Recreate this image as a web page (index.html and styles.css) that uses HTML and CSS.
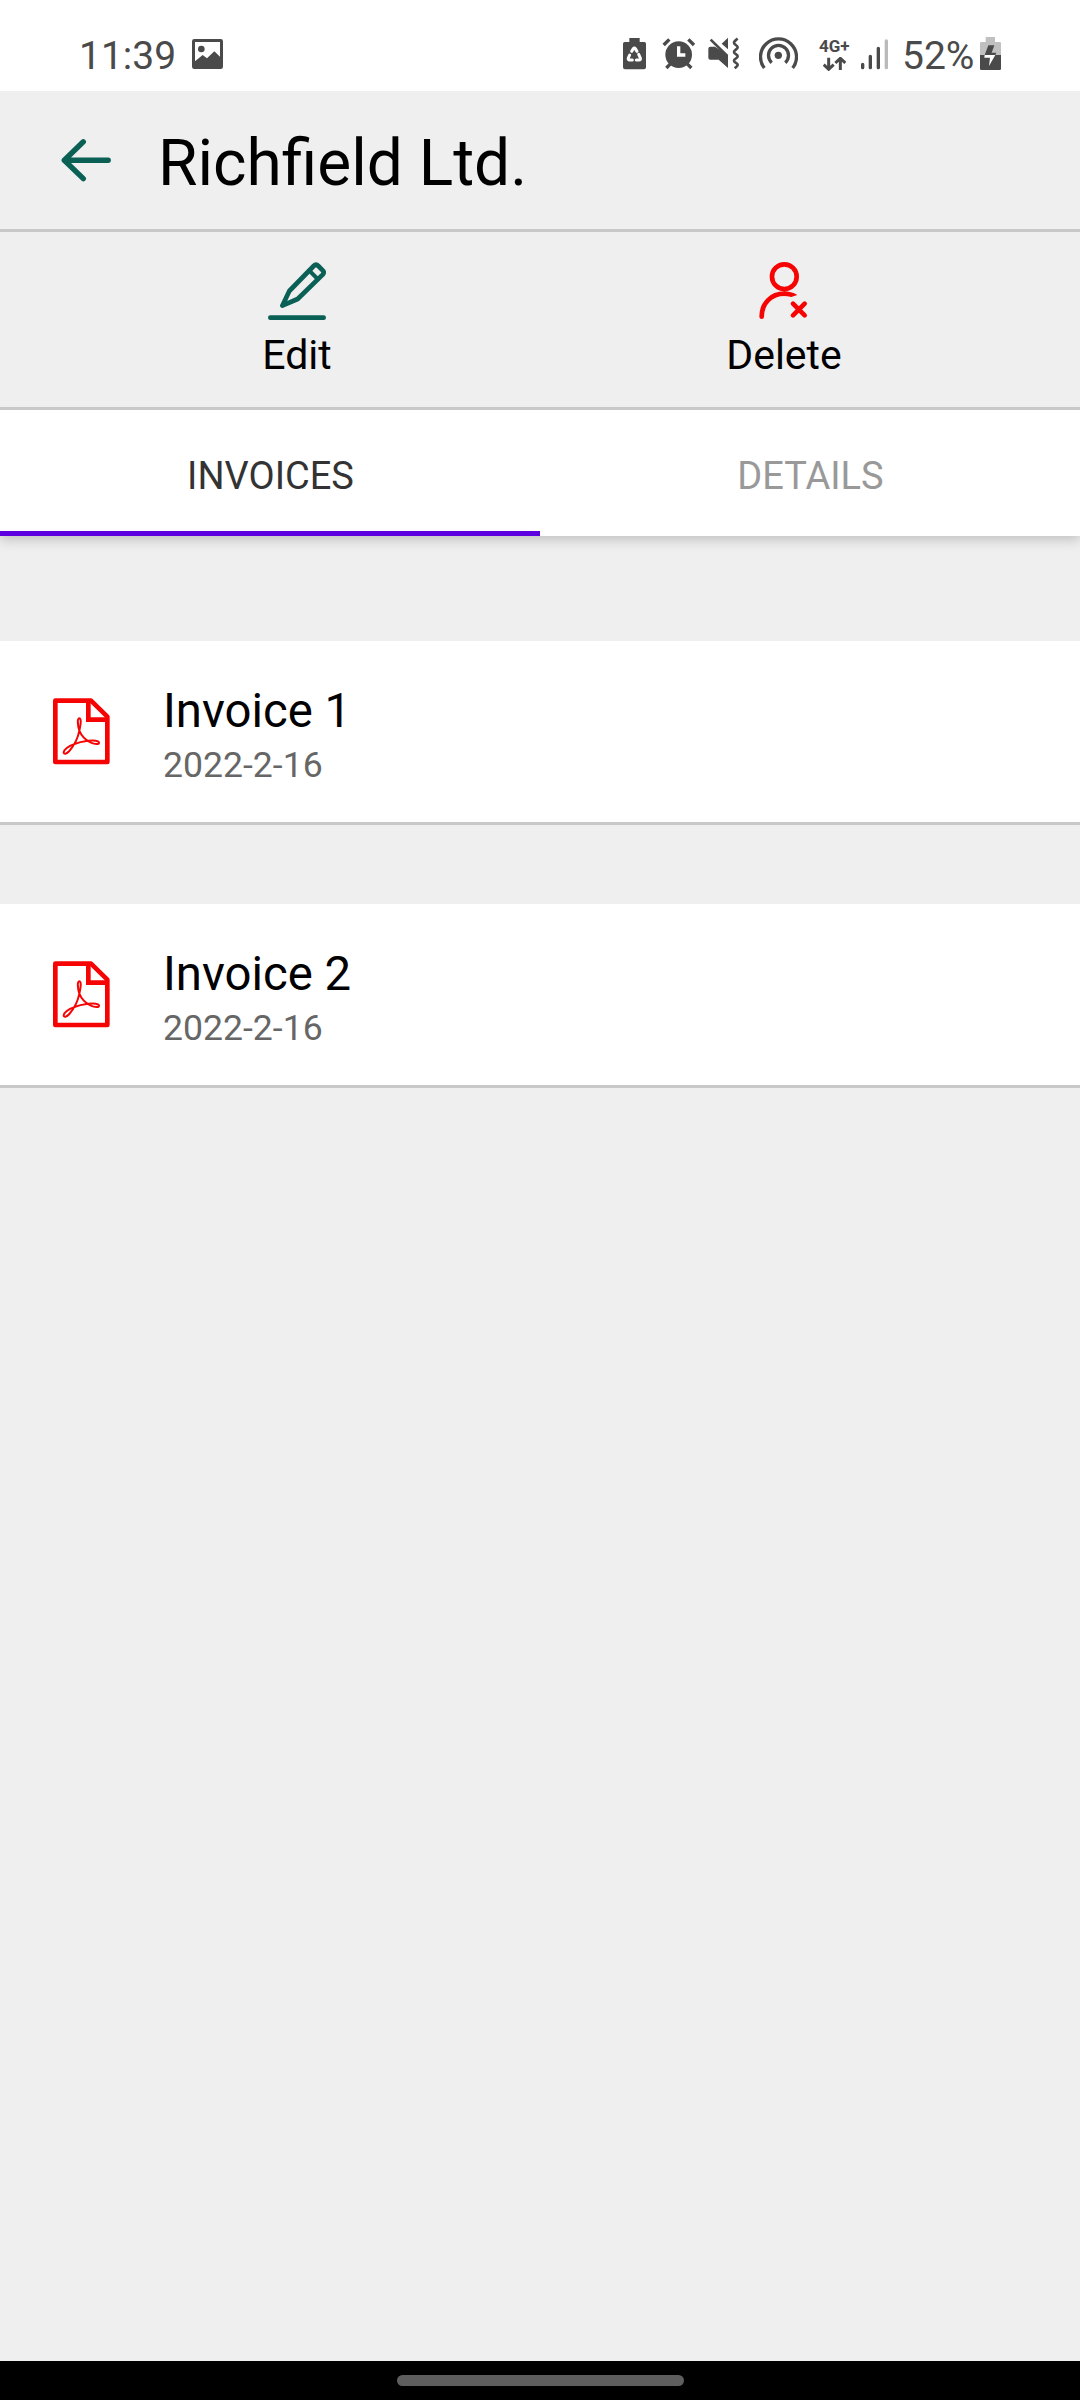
FILE: index.html
```html
<!DOCTYPE html>
<html lang="en">
<head>
<meta charset="utf-8">
<title>Richfield Ltd.</title>
<link rel="stylesheet" href="styles.css">
</head>
<body>
<div class="screen">
  <div class="status-bar">
    <div class="status-group status-left">
      <span class="status-text clock">11:39</span>
      <svg width="31" height="36" viewBox="396 45 93 108">
        <path fill="#4a4a4a" fill-rule="evenodd" d="M403 57h79q7 0 7 7v76q0 7-7 7h-79q-7 0-7-7V64q0-7 7-7zM405 66v58l23-19 13 10 22-21 17 16V66z"/>
        <circle cx="424" cy="87" r="10" fill="#4a4a4a"/>
      </svg>
    </div>
    <div class="status-group">
      <svg width="23" height="36" viewBox="69 45 69 108">
        <path fill="#4a4a4a" d="M88 54h31v12h14q5 0 5 5v71q0 6-6 6H75q-6 0-6-6V71q0-5 5-5h14z"/>
        <path fill="none" stroke="#fff" stroke-width="9" stroke-linecap="round" stroke-linejoin="round" d="M95 94l5-8q3-4 6 0l5 8M116 103l5 11q2 6-4 6h-8M97 120h-8q-6 0-4-6l4-9"/>
      </svg>
      <svg class="alarm" width="34" height="36" viewBox="187 45 102 108">
        <circle cx="237" cy="104" r="40" fill="#4a4a4a"/>
        <path fill="none" stroke="#4a4a4a" stroke-width="10" d="M192 75l17-17M283 75l-17-17M200 144l13-13M275 144l-13-13"/>
        <path fill="none" stroke="#fff" stroke-width="10" d="M237 79v26h20"/>
      </svg>
      <svg class="mute" width="31" height="36" viewBox="324 45 93 108">
        <path fill="#4a4a4a" d="M331 80h14l39 26v38l-28-25h-25q-6 0-6-6V86q0-6 6-6zM365 71l19-18v35z"/>
        <path fill="none" stroke="#4a4a4a" stroke-width="8" d="M332 59l50 49"/>
        <path fill="none" stroke="#4a4a4a" stroke-width="8" stroke-linejoin="round" d="M413 56c-8 6-11 9-11 12 0 6 11 8 11 14s-11 8-11 14 11 7 11 13-11 7-11 13 11 7 11 12c0 3-3 6-9 11"/>
      </svg>
      <svg class="hotspot" width="39" height="36" viewBox="477 45 117 108">
        <circle cx="535" cy="106" r="11" fill="#4a4a4a"/>
        <path fill="none" stroke="#4a4a4a" stroke-width="10" d="M515 128a30 30 0 1 1 41 0M493 144a54 54 0 1 1 85 0"/>
      </svg>
      <div class="network">
        <span class="network-label">4G+</span>
        <svg width="23" height="14" viewBox="69 111 69 42">
          <path fill="none" stroke="#4a4a4a" stroke-width="9" d="M86 113v34M71 134l15 14 15-14M121 150v-34M106 129l15-14 15 14"/>
        </svg>
      </div>
      <svg class="signal" width="27" height="36" viewBox="183 45 81 108">
        <path fill="none" stroke="#4a4a4a" stroke-width="10" stroke-linecap="round" d="M188 133v10M211 109v34M235 85v58"/>
        <path fill="none" stroke="#bababa" stroke-width="10" stroke-linecap="round" d="M259 63v80"/>
      </svg>
      <span class="status-text percent">52%</span>
      <svg width="21" height="36" viewBox="540 45 63 108">
        <path fill="#c0c0c0" d="M557 51h28v15h14q4 0 4 4v35h-63V70q0-4 4-4h13z"/>
        <path fill="#4a4a4a" d="M540 105h63v41q0 4-4 4h-55q-4 0-4-4z"/>
        <path fill="#4a4a4a" d="M565 76h18l-8 22h14l-3 7h-32z"/>
        <path fill="#fff" d="M554 105h32l-19 33 3-25h-17z"/>
      </svg>
    </div>
  </div>

  <header class="app-header">
    <svg width="50" height="44" viewBox="61 138 50 44">
      <path fill="none" stroke="#0a6055" stroke-width="5.4" stroke-linecap="round" stroke-linejoin="round" d="M108.2 160.2H64.3M83.3 141.8L64.3 160.2l19 18.4"/>
    </svg>
    <h1 class="title">Richfield Ltd.</h1>
  </header>

  <div class="actions">
    <div class="action action-edit">
      <svg width="58" height="60" viewBox="114 63 174 180">
        <g fill="none" stroke="#0a6055" stroke-width="14" stroke-linecap="round" stroke-linejoin="round">
          <path d="M121 233h160"/>
          <path d="M157 197l21-44 73-75q7-7 14 0l13 13q6 6 0 13l-75 73z"/>
          <path stroke-width="12" d="M238 92l25 25"/>
        </g>
      </svg>
      <span class="action-label">Edit</span>
    </div>
    <div class="action action-delete">
      <svg width="48" height="60" viewBox="179 63 144 180" overflow="visible">
        <g fill="none" stroke="#f60404" stroke-width="14" stroke-linecap="round">
          <circle cx="252" cy="110" r="37"/>
          <path d="M184 230c0-41 29-69 68-69"/>
          <path d="M278 191l35 35M313 191l-35 35"/>
        </g>
        <path fill="#f60404" d="M250 154c16 0 29 4 41 11l-18 6c-8-2-15-3-23-3z"/>
      </svg>
      <span class="action-label">Delete</span>
    </div>
  </div>

  <nav class="tabs">
    <div class="tab tab-active">INVOICES</div>
    <div class="tab">DETAILS</div>
  </nav>

  <main class="invoices">
    <article class="invoice">
      <svg width="57" height="67" viewBox="69 54 171 201">
        <g fill="none" stroke="#f60404" stroke-width="14" stroke-linejoin="round">
          <path d="M76 62h107l49 48v136H76z"/>
          <path stroke-linejoin="miter" d="M175 62v57h57"/>
        </g>
        <path fill="none" stroke="#f60404" stroke-width="6" stroke-linecap="round" stroke-linejoin="round" d="M148 152C143 135 141 115 148 115C155 115 152 136 148 152C155 169 166 180 181 187C196 194 207 193 207 188C207 181 192 181 174 182C157 184 145 187 131 193C116 198 101 209 101 217C101 224 110 222 118 213C130 199 144 174 148 152"/>
      </svg>
      <div class="invoice-text">
        <div class="invoice-name">Invoice 1</div>
        <div class="invoice-date">2022-2-16</div>
      </div>
    </article>
    <article class="invoice">
      <svg width="57" height="67" viewBox="69 54 171 201">
        <g fill="none" stroke="#f60404" stroke-width="14" stroke-linejoin="round">
          <path d="M76 62h107l49 48v136H76z"/>
          <path stroke-linejoin="miter" d="M175 62v57h57"/>
        </g>
        <path fill="none" stroke="#f60404" stroke-width="6" stroke-linecap="round" stroke-linejoin="round" d="M148 152C143 135 141 115 148 115C155 115 152 136 148 152C155 169 166 180 181 187C196 194 207 193 207 188C207 181 192 181 174 182C157 184 145 187 131 193C116 198 101 209 101 217C101 224 110 222 118 213C130 199 144 174 148 152"/>
      </svg>
      <div class="invoice-text">
        <div class="invoice-name">Invoice 2</div>
        <div class="invoice-date">2022-2-16</div>
      </div>
    </article>
  </main>

  <footer class="nav-bar"><div class="nav-handle"></div></footer>
</div>
</body>
</html>
```
FILE: styles.css
```css
* {
  box-sizing: border-box;
}

body {
  margin: 0;
  font-family: Roboto, sans-serif;
  color: #000;
}

svg {
  display: block;
  flex: none;
}

.screen {
  display: flex;
  flex-direction: column;
  width: 1080px;
  height: 2400px;
  background: #efefef;
}

.status-bar {
  display: flex;
  justify-content: space-between;
  height: 91px;
  padding: 35px 79px 0;
  background: #fff;
}

.status-group {
  display: flex;
  align-items: flex-start;
}

.status-text {
  font-size: 39px;
  line-height: 42px;
  color: #4a4a4a;
  white-space: nowrap;
}

.clock {
  width: 113px;
}

.alarm {
  margin-left: 16px;
}

.mute {
  margin-left: 12px;
}

.hotspot {
  margin-left: 20px;
}

.network {
  display: flex;
  flex-direction: column;
  align-items: flex-start;
  width: 33px;
  margin-left: 21px;
}

.network svg {
  margin-left: 4px;
}

.network-label {
  height: 22px;
  font-size: 17px;
  font-weight: 700;
  line-height: 22px;
  color: #4a4a4a;
}

.signal {
  margin-left: 9px;
}

.percent {
  width: 78px;
  margin-left: 14px;
}

.app-header {
  display: flex;
  align-items: center;
  gap: 47px;
  height: 141px;
  padding-left: 61px;
  border-bottom: 3px solid #c8c8c8;
}

.title {
  margin: 8px 0 0;
  font-size: 64px;
  font-weight: 400;
  line-height: 76px;
}

.actions {
  display: flex;
  height: 178px;
  padding-top: 29px;
  border-bottom: 3px solid #c8c8c8;
}

.action {
  display: flex;
  flex-direction: column;
  align-items: center;
  gap: 10px;
}

.action-edit {
  width: 594px;
}

.action-delete {
  width: 380px;
}

.action-label {
  font-size: 41px;
  line-height: 48px;
}

.tabs {
  display: flex;
  height: 126px;
  background: #fff;
  box-shadow: 0 3px 12px rgba(0, 0, 0, 0.22);
  clip-path: inset(0 0 -30px 0);
}

.tab {
  flex: 1;
  padding: 6px 0 0 1px;
  border-bottom: 5px solid transparent;
  font-size: 38px;
  line-height: 120px;
  text-align: center;
  color: #999;
}

.tab-active {
  border-bottom-color: #5c00e0;
  color: #333;
}

.invoices {
  display: flex;
  flex: 1;
  flex-direction: column;
  gap: 79px;
  padding-top: 105px;
}

.invoice {
  display: flex;
  align-items: center;
  gap: 53px;
  height: 184px;
  padding-left: 53px;
  border-bottom: 3px solid #c8c8c8;
  background: #fff;
}

.invoice-text {
  padding-top: 13px;
}

.invoice-name {
  font-size: 47.3px;
  line-height: 54px;
}

.invoice-date {
  font-size: 35.6px;
  line-height: 54px;
  color: #666;
}

.nav-bar {
  display: flex;
  justify-content: center;
  height: 39px;
  padding-top: 14px;
  background: #000;
}

.nav-handle {
  width: 287px;
  height: 11px;
  border-radius: 6px;
  background: #5e5e5e;
}
```
